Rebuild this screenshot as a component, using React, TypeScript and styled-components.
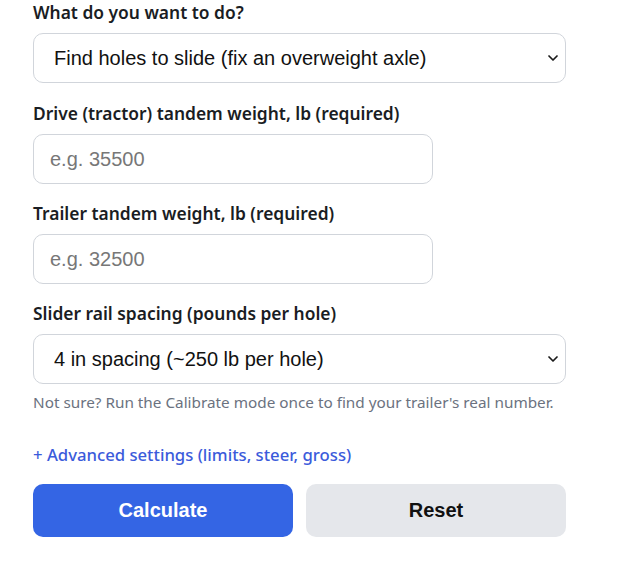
import React from "react";
import styled, { createGlobalStyle } from "styled-components";
import { ChevronDown } from "lucide-react";

const Global = createGlobalStyle`
  html, body { margin: 0; padding: 0; background: #ffffff; }
  body { font-family: "Noto Sans", "Open Sans", sans-serif; color: #111827; }
  * { box-sizing: border-box; }
`;

const Form = styled.form`
  display: flex;
  flex-direction: column;
  padding: 0 33px;
  width: 599px;
`;

const Field = styled.div<{ $last?: boolean; $first?: boolean }>`
  display: flex;
  flex-direction: column;
  gap: 8px;
  margin-bottom: ${(p) => (p.$last ? 0 : p.$first ? 18 : 17)}px;
`;

const Label = styled.label`
  font-size: 17.4px;
  font-weight: 600;
  line-height: 25px;
  color: #1a1d23;
`;

const controlBase = `
  height: 50px;
  border: 1px solid #d1d5db;
  border-radius: 10px;
  background: #ffffff;
  font-family: "Liberation Sans", Arial, sans-serif;
  font-size: 20px;
  color: #111111;
  padding: 0 16px;
  outline: none;
`;

const SelectWrap = styled.div`
  position: relative;
  width: 533px;
  height: 50px;
`;

const Select = styled.select`
  ${controlBase}
  appearance: none;
  -webkit-appearance: none;
  width: 100%;
  padding: 0 36px 0 20px;
`;

const Chevron = styled(ChevronDown)`
  position: absolute;
  right: 5px;
  top: 17px;
  color: #1a1a1a;
  pointer-events: none;
`;

const Input = styled.input<{ $w?: number }>`
  ${controlBase}
  width: ${(p) => p.$w ?? 400}px;
  &::placeholder { color: #777777; }
`;

const Hint = styled.p`
  margin: 7px 0 0 0;
  font-size: 15.3px;
  line-height: 22px;
  color: #6b7280;
`;

const AdvancedLink = styled.a`
  display: block;
  margin-top: 29px;
  font-size: 16.7px;
  font-weight: 500;
  line-height: 25px;
  color: #3b5bdb;
  text-decoration: none;
  cursor: pointer;
`;

const Buttons = styled.div`
  display: grid;
  grid-template-columns: 260px 260px;
  gap: 13px;
  margin-top: 17px;
`;

const Button = styled.button<{ $primary?: boolean }>`
  height: 53px;
  border: none;
  border-radius: 10px;
  font-family: "Liberation Sans", Arial, sans-serif;
  font-size: 20px;
  font-weight: 700;
  background: ${(p) => (p.$primary ? "#3465e4" : "#e5e7eb")};
  color: ${(p) => (p.$primary ? "#ffffff" : "#111111")};
  cursor: pointer;
`;

function DropDown(props: { id: string; value: string; options: [string, string][] }) {
  return (
    <SelectWrap>
      <Select id={props.id} defaultValue={props.value}>
        {props.options.map(([v, t]) => (
          <option key={v} value={v}>{t}</option>
        ))}
      </Select>
      <Chevron size={16} strokeWidth={2.6} />
    </SelectWrap>
  );
}

export default function App() {
  return (
    <>
      <Global />
      <Form onSubmit={(e) => e.preventDefault()}>
        <Field $first>
          <Label htmlFor="mode">What do you want to do?</Label>
          <DropDown
            id="mode"
            value="slide"
            options={[
              ["slide", "Find holes to slide (fix an overweight axle)"],
              ["calibrate", "Calibrate my trailer"],
            ]}
          />
        </Field>
        <Field>
          <Label htmlFor="drive">Drive (tractor) tandem weight, lb (required)</Label>
          <Input id="drive" placeholder="e.g. 35500" />
        </Field>
        <Field>
          <Label htmlFor="trailer">Trailer tandem weight, lb (required)</Label>
          <Input id="trailer" placeholder="e.g. 32500" />
        </Field>
        <Field $last>
          <Label htmlFor="spacing">Slider rail spacing (pounds per hole)</Label>
          <DropDown
            id="spacing"
            value="4"
            options={[
              ["4", "4 in spacing (~250 lb per hole)"],
              ["6", "6 in spacing (~400 lb per hole)"],
            ]}
          />
        </Field>
        <Hint>Not sure? Run the Calibrate mode once to find your trailer's real number.</Hint>
        <AdvancedLink>+ Advanced settings (limits, steer, gross)</AdvancedLink>
        <Buttons>
          <Button type="button" $primary>Calculate</Button>
          <Button type="button">Reset</Button>
        </Buttons>
      </Form>
    </>
  );
}
